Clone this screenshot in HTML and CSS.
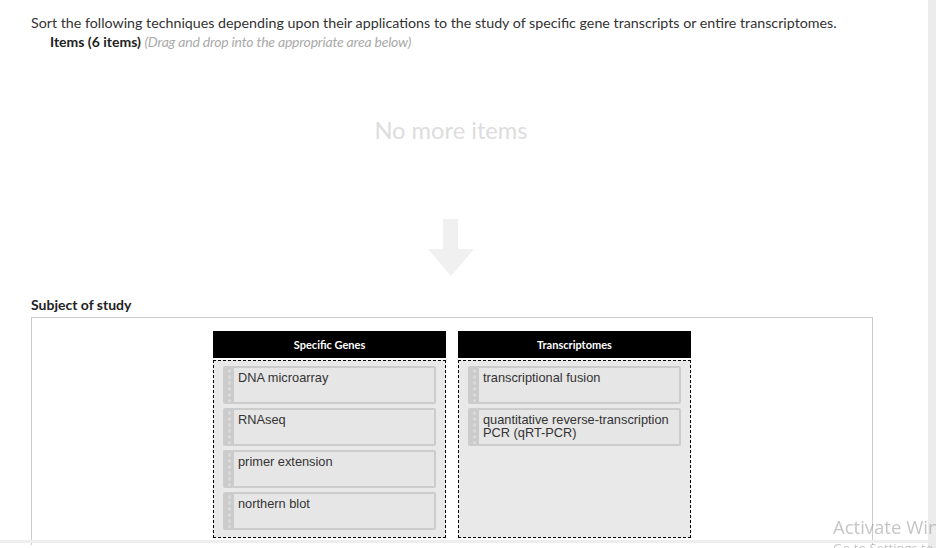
FILE: index.html
```html
<!DOCTYPE html>
<html lang="en">
<head>
    <meta charset="UTF-8">
    <title>Sort the techniques</title>
    <link rel="stylesheet" href="styles.css">
</head>
<body>
    <div class="page">
        <p class="question">Sort the following techniques depending upon their applications to the study of specific gene transcripts or entire transcriptomes.</p>
        <div class="items-title">
            <b>Items (6 items)</b> <i>(Drag and drop into the appropriate area below)</i>
        </div>

        <!-- source pool, already emptied -->
        <div class="pool">
            <div class="empty">No more items</div>
            <svg class="arrow" width="46" height="58" viewBox="0 0 46 58">
                <polygon points="15,0 30,0 30,30 46,30 23,57 0,30 15,30" fill="#f0f0f0"/>
            </svg>
        </div>

        <h3 class="subject">Subject of study</h3>
        <div class="board">
            <div class="column">
                <div class="col-head">Specific Genes</div>
                <div class="drop">
                    <div class="card"><span class="grip"></span><span class="label">DNA microarray</span></div>
                    <div class="card"><span class="grip"></span><span class="label">RNAseq</span></div>
                    <div class="card"><span class="grip"></span><span class="label">primer extension</span></div>
                    <div class="card"><span class="grip"></span><span class="label">northern blot</span></div>
                </div>
            </div>
            <div class="column">
                <div class="col-head">Transcriptomes</div>
                <div class="drop">
                    <div class="card"><span class="grip"></span><span class="label">transcriptional fusion</span></div>
                    <div class="card"><span class="grip"></span><span class="label">quantitative reverse-transcription PCR (qRT-PCR)</span></div>
                </div>
            </div>
        </div>
    </div>

    <div class="scrollbar"></div>
    <div class="bottom-edge"></div>
    <div class="activate">
        <div class="act-1">Activate Windows</div>
        <div class="act-2">Go to Settings to activate Windows.</div>
    </div>
</body>
</html>
```

FILE: styles.css
```css
html, body {
    margin: 0;
    background: #fff;
    overflow: hidden;
}
body {
    font-family: Lato, "Open Sans", sans-serif;
    color: #333;
    height: 548px;
}
.page {
    padding: 15px 0 0 31px;
    width: 842px;
}
.question {
    margin: 0;
    font-size: 14.25px;
    line-height: 16px;
}
.items-title {
    margin: 3px 0 0 19px;
    font-size: 14px;
    line-height: 16px;
}
.items-title b {
    color: #222;
}
.items-title i {
    font-size: 14px;
    color: #aaa;
    letter-spacing: -0.2px;
}
.pool {
    height: 246px;
    display: flex;
    flex-direction: column;
    align-items: center;
}
.empty {
    margin-top: 66px;
    font-size: 23.7px;
    line-height: 28px;
    color: #ddd;
    margin-left: -2px;
}
.arrow {
    margin-top: 75px;
    margin-left: -2px;
}
.subject {
    margin: 0;
    font-size: 14px;
    line-height: 18px;
    color: #222;
}
.board {
    margin-top: 3px;
    border: 1px solid #ccc;
    border-bottom: none;
    height: 228px;
    box-sizing: border-box;
    padding-top: 13px;
    display: flex;
    justify-content: center;
    gap: 12px;
}
.column {
    width: 233px;
}
.col-head {
    height: 27px;
    line-height: 27px;
    background: #000;
    color: #fff;
    font-size: 11px;
    font-weight: bold;
    text-align: center;
}
.drop {
    margin-top: 2px;
    height: 171px;
    border: 1px dashed #000;
    background: #e9e9e9;
    padding: 5px 9px 0;
    display: flex;
    flex-direction: column;
    gap: 4px;
}
.card {
    height: 34px;
    border: 2px solid #ccc;
    border-radius: 2px;
    background: #e6e6e6;
    display: flex;
}
.grip {
    width: 9px;
    flex: none;
    background-color: #cbcbcb;
    background-image: radial-gradient(circle, #d9d9d9 1.5px, transparent 2px);
    background-size: 9px 6px;
}
.label {
    padding: 3px 0 0 4px;
    font-family: "Liberation Sans", Arial, sans-serif;
    font-size: 12.8px;
    line-height: 13px;
    color: #333;
}
.scrollbar {
    position: fixed;
    top: 0;
    right: 0;
    width: 8px;
    height: 100%;
    background: #ececec;
}
.bottom-edge {
    position: fixed;
    left: 0;
    top: 540px;
    width: 928px;
    height: 3px;
    background: #eeeeee;
}
.activate {
    position: fixed;
    left: 833px;
    top: 514px;
    width: 103px;
    height: 34px;
    overflow: hidden;
    white-space: nowrap;
    font-family: "Open Sans", "DejaVu Sans", sans-serif;
    color: rgba(150, 150, 150, 0.55);
}
.act-1 {
    font-size: 18.5px;
    line-height: 26px;
}
.act-2 {
    font-size: 13px;
    line-height: 16px;
}
```
